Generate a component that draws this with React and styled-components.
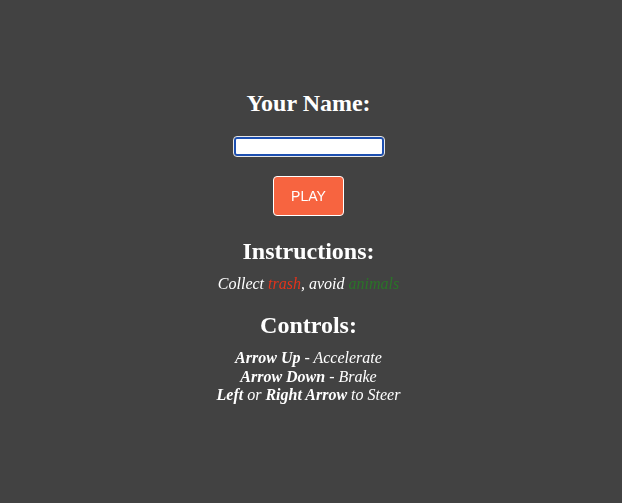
import React from 'react';
import styled, { createGlobalStyle } from 'styled-components';

const GlobalStyle = createGlobalStyle`
  body {
    margin: 0;
    background: #424242;
    color: #ffffff;
    font-family: "Liberation Serif", "Times New Roman", serif;
  }
`;

const Page = styled.main`
  display: flex;
  flex-direction: column;
  align-items: center;
  text-align: center;
  padding: 90px 5px 0 0;
  min-height: 100vh;
  box-sizing: border-box;
`;

const Heading = styled.h2`
  margin: ${props => props.$top || 0}px 0 0;
  font-size: 24px;
  font-weight: bold;
  line-height: 27px;
`;

const NameInput = styled.input`
  margin-top: 20px;
  width: 150px;
  height: 19px;
  box-sizing: border-box;
  border: 2px solid #1d4fb0;
  border-radius: 3px;
  outline: 1px solid #e8e8e8;
  background: #ffffff;
  padding: 0 3px;
  font-size: 13px;
`;

const PlayButton = styled.button`
  margin-top: 20px;
  width: 71px;
  height: 40px;
  background: #f76440;
  color: #ffffff;
  border: 1px solid #ffffff;
  border-radius: 4px;
  font-family: "Liberation Sans", Arial, sans-serif;
  font-size: 14px;
  cursor: pointer;
`;

const Note = styled.p`
  margin: ${props => props.$top || 10}px 0 0;
  font-size: 16px;
  font-style: italic;
  line-height: 18.4px;
`;

const Trash = styled.span`
  color: #e2331b;
`;

const Animals = styled.span`
  color: #2a7428;
`;

export default function App() {
  return (
    <>
      <GlobalStyle />
      <Page>
        <Heading>Your Name:</Heading>
        <NameInput type="text" autoFocus />
        <PlayButton>PLAY</PlayButton>
        <Heading $top={22}>Instructions:</Heading>
        <Note>
          Collect <Trash>trash</Trash>, avoid <Animals>animals</Animals>
        </Note>
        <Heading $top={19}>Controls:</Heading>
        <Note>
          <b>Arrow Up</b> - Accelerate
          <br />
          <b>Arrow Down</b> - Brake
          <br />
          <b>Left</b> or <b>Right Arrow</b> to Steer
        </Note>
      </Page>
    </>
  );
}
